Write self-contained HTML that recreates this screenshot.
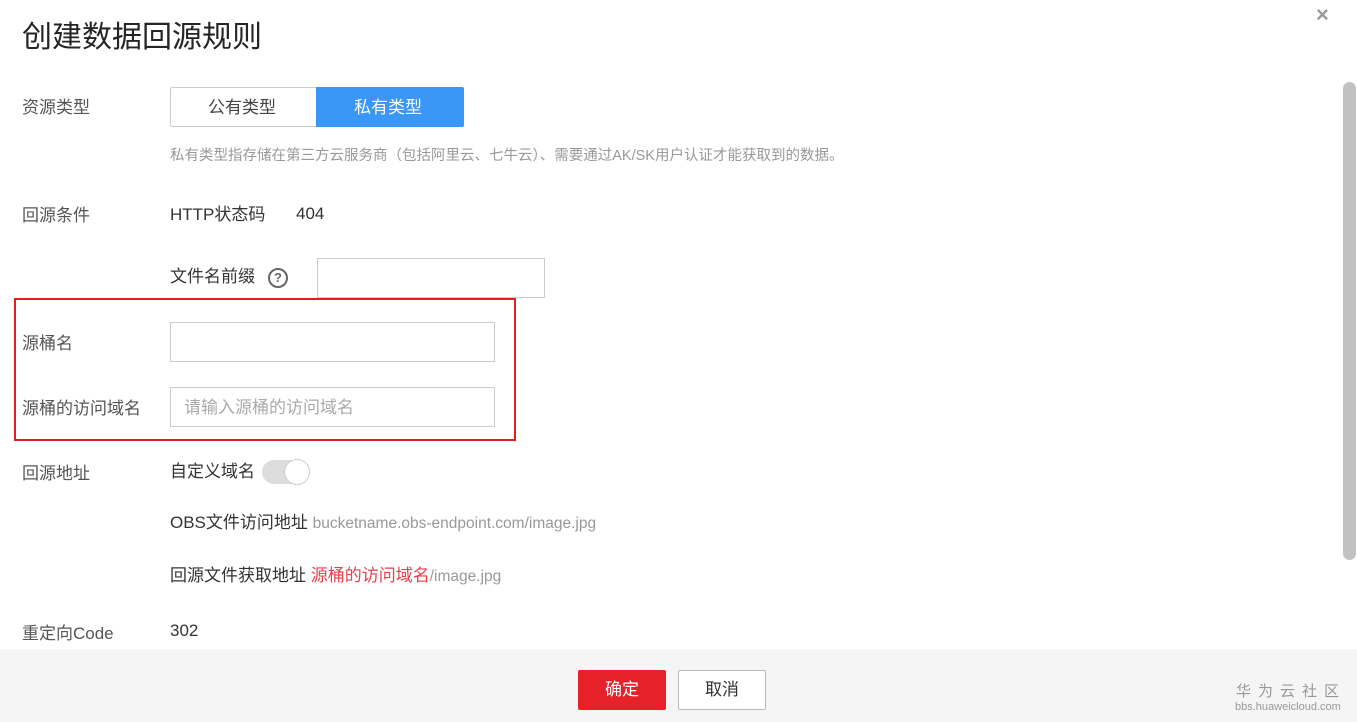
<!DOCTYPE html>
<html><head><meta charset="utf-8"><style>
body{margin:0;width:1357px;height:722px;background:#fff;position:relative;overflow:hidden;font-family:"Liberation Sans","Noto Sans CJK SC",sans-serif;color:#333}
.a{position:absolute;white-space:nowrap}
.l{font-size:17px;color:#555}
.t{font-size:17px;color:#333}
.in{position:absolute;border:1px solid #ccc;background:#fff;box-sizing:border-box}
</style></head><body>
<div class="a" style="left:22px;top:12px;font-size:30px;color:#252525">创建数据回源规则</div>
<div class="a" style="left:1316px;top:2px;font-size:22px;color:#999;font-weight:bold">×</div>
<div class="a" style="left:1343px;top:82px;width:13px;height:478px;background:#c1c1c1;border-radius:7px"></div>

<div class="a l" style="left:22px;top:93px">资源类型</div>
<div class="in" style="left:170px;top:87px;width:147px;height:40px;border-radius:2px 0 0 2px"></div>
<div class="a t" style="left:208px;top:93px;color:#444">公有类型</div>
<div class="a" style="left:316px;top:87px;width:148px;height:40px;background:#3a97f5;border-radius:0 2px 2px 0"></div>
<div class="a" style="left:354px;top:93px;font-size:17px;color:#fff">私有类型</div>
<div class="a" style="left:170px;top:144px;font-size:14.5px;color:#999">私有类型指存储在第三方云服务商（包括阿里云、七牛云）、需要通过AK/SK用户认证才能获取到的数据。</div>

<div class="a l" style="left:22px;top:201px">回源条件</div>
<div class="a t" style="left:170px;top:200px">HTTP状态码</div>
<div class="a t" style="left:296px;top:204px">404</div>
<div class="a t" style="left:170px;top:262px">文件名前缀</div>
<div class="a" style="left:268px;top:268px;width:16px;height:16px;border:2px solid #666;border-radius:50%;font-size:13px;font-weight:bold;color:#666;text-align:center;line-height:16px">?</div>
<div class="in" style="left:317px;top:258px;width:228px;height:40px"></div>

<div class="a" style="left:14px;top:298px;width:498px;height:139px;border:2px solid #e02020"></div>
<div class="a l" style="left:22px;top:329px">源桶名</div>
<div class="in" style="left:170px;top:322px;width:325px;height:40px"></div>
<div class="a l" style="left:22px;top:394px">源桶的访问域名</div>
<div class="in" style="left:170px;top:387px;width:325px;height:40px"></div>
<div class="a" style="left:184px;top:393px;font-size:17px;color:#aaa">请输入源桶的访问域名</div>

<div class="a l" style="left:22px;top:459px">回源地址</div>
<div class="a t" style="left:170px;top:457px">自定义域名</div>
<div class="a" style="left:262px;top:460px;width:46px;height:24px;background:#ddd;border-radius:12px"></div>
<div class="a" style="left:284px;top:459px;width:24px;height:24px;background:#fff;border:1px solid #ccc;border-radius:50%"></div>
<div class="a t" style="left:170px;top:508px">OBS文件访问地址 <span style="font-size:15.5px;color:#999">bucketname.obs-endpoint.com/image.jpg</span></div>
<div class="a t" style="left:170px;top:561px">回源文件获取地址 <span style="color:#e8414b">源桶的访问域名</span><span style="font-size:15.5px;color:#999">/image.jpg</span></div>

<div class="a l" style="left:22px;top:619px">重定向Code</div>
<div class="a t" style="left:170px;top:621px">302</div>

<div class="a" style="left:0;top:649px;width:1357px;height:73px;background:#f5f5f5"></div>
<div class="a" style="left:578px;top:670px;width:88px;height:40px;background:#e6212a;border-radius:2px;color:#fff;font-size:17px;text-align:center;line-height:40px">确定</div>
<div class="a" style="left:678px;top:670px;width:88px;height:40px;background:#fff;border:1px solid #bbb;box-sizing:border-box;border-radius:2px;color:#333;font-size:17px;text-align:center;line-height:38px">取消</div>
<div class="a" style="left:1236px;top:680px;font-size:15px;color:#999;letter-spacing:7px">华为云社区</div>
<div class="a" style="left:1235px;top:701px;font-size:11px;color:#999">bbs.huaweicloud.com</div>
</body></html>
